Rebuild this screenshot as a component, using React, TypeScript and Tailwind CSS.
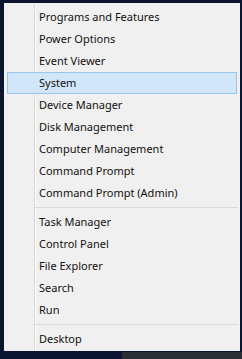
const groups: string[][] = [
  [
    'Programs and Features',
    'Power Options',
    'Event Viewer',
    'System',
    'Device Manager',
    'Disk Management',
    'Computer Management',
    'Command Prompt',
    'Command Prompt (Admin)',
  ],
  ['Task Manager', 'Control Panel', 'File Explorer', 'Search', 'Run'],
  ['Desktop'],
];

const ACTIVE = 'System';

export default function App() {
  return (
    <div className="flex h-[359px] w-[242px] flex-col overflow-hidden bg-[#0b1431] font-['Noto_Sans',sans-serif]">
      <div className="ml-[4px] mt-[3px] w-[236px] bg-[#f0f0f0] bg-[linear-gradient(to_right,#f0f0f0_30px,#d9d9d9_30px,#d9d9d9_31px,#fbfbfb_31px,#fbfbfb_32px,#f0f0f0_32px)] pb-[1px] pt-[3px]">
        {groups.map((items, gi) => (
          <div key={gi}>
            {gi > 0 ? (
              <div className="ml-[30px] mr-[2px] py-[3px]">
                <div className="h-px bg-[#d9d9d9]" />
              </div>
            ) : null}
            {items.map((label) => (
              <div
                key={label}
                className={`mx-[3px] flex h-[22px] items-center border pl-[31px] text-[11px] text-[#111] ${
                  label === ACTIVE ? 'border-[#99c5ec] bg-[#d1e6f8]' : 'border-transparent'
                }`}
              >
                {label}
              </div>
            ))}
          </div>
        ))}
      </div>
      <div className="mt-auto flex h-[7px]">
        <div className="w-[122px] bg-[#0b1431]" />
        <div className="flex-1 bg-[#2c2d33]" />
      </div>
    </div>
  );
}
